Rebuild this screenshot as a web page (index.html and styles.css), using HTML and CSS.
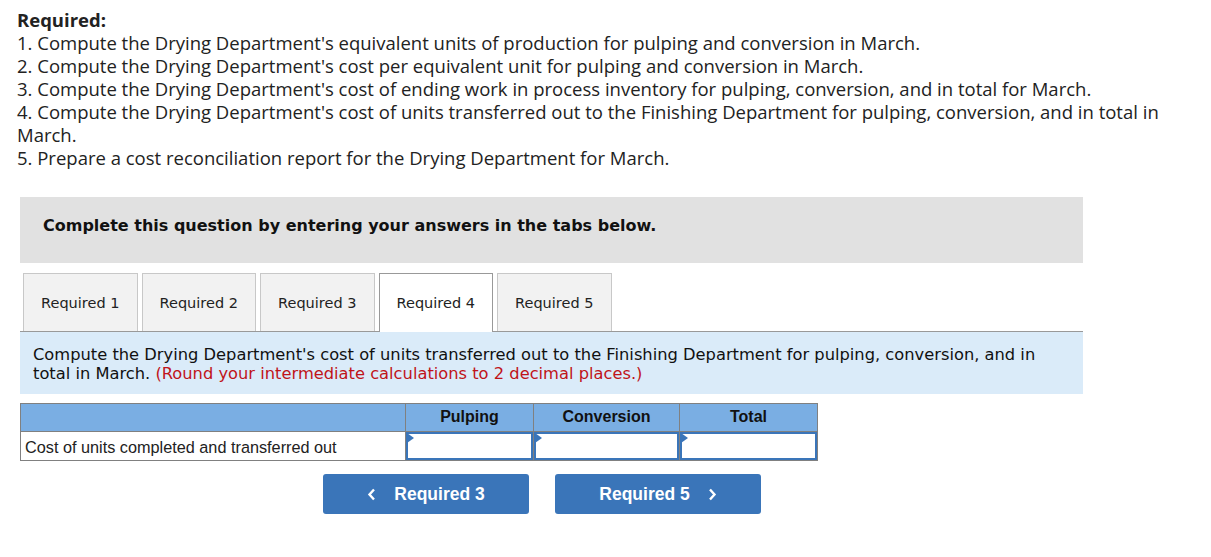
FILE: index.html
```html
<!DOCTYPE html>
<html>
<head>
<meta charset="utf-8">
<link rel="stylesheet" href="styles.css">
</head>
<body>
<div class="page">
  <div class="req">
    <div class="req-title">Required:</div>
    <div>1. Compute the Drying Department's equivalent units of production for pulping and conversion in March.</div>
    <div>2. Compute the Drying Department's cost per equivalent unit for pulping and conversion in March.</div>
    <div>3. Compute the Drying Department's cost of ending work in process inventory for pulping, conversion, and in total for March.</div>
    <div>4. Compute the Drying Department's cost of units transferred out to the Finishing Department for pulping, conversion, and in total in March.</div>
    <div>5. Prepare a cost reconciliation report for the Drying Department for March.</div>
  </div>

  <div class="panel">
    <div class="notice">Complete this question by entering your answers in the tabs below.</div>
    <div class="tabs">
      <div class="tab">Required 1</div>
      <div class="tab">Required 2</div>
      <div class="tab">Required 3</div>
      <div class="tab active">Required 4</div>
      <div class="tab">Required 5</div>
    </div>
    <div class="instr">Compute the Drying Department's cost of units transferred out to the Finishing Department for pulping, conversion, and in total in March. <span class="red">(Round your intermediate calculations to 2 decimal places.)</span></div>

    <table class="grid">
      <tr class="head">
        <th class="c-label"></th>
        <th class="c-pulp">Pulping</th>
        <th class="c-conv">Conversion</th>
        <th class="c-tot">Total</th>
      </tr>
      <tr>
        <td class="label">Cost of units completed and transferred out</td>
        <td class="inp"><div class="box"><span class="flag"></span></div></td>
        <td class="inp"><div class="box"><span class="flag"></span></div></td>
        <td class="inp"><div class="box"><span class="flag"></span></div></td>
      </tr>
    </table>

    <div class="nav">
      <div class="btn"><svg class="chev l" width="9" height="13" viewBox="0 0 9 13"><path d="M7 1.5 L2.5 6.5 L7 11.5" fill="none" stroke="#fff" stroke-width="2.4"/></svg><span>Required 3</span></div>
      <div class="btn"><span>Required 5</span><svg class="chev r" width="9" height="13" viewBox="0 0 9 13"><path d="M2 1.5 L6.5 6.5 L2 11.5" fill="none" stroke="#fff" stroke-width="2.4"/></svg></div>
    </div>
  </div>
</div>
</body>
</html>
```

FILE: styles.css
```css
html, body { margin: 0; padding: 0; background: #fff; }
.page { padding: 8px 0 0 17px; }
.req {
  font-family: "Open Sans", Lato, sans-serif;
  font-size: 18.5px;
  line-height: 23px;
  color: #222;
  width: 1170px;
}
.req-title { font-weight: bold; }
.panel { margin: 28px 0 0 3px; width: 1063px; }
.notice {
  background: #e1e1e1;
  height: 66px;
  box-sizing: border-box;
  padding: 19px 0 0 23px;
  font-family: "DejaVu Sans", Verdana, sans-serif;
  font-weight: bold;
  font-size: 16px;
  color: #111;
}
.tabs {
  display: flex;
  gap: 4px;
  padding: 10px 0 0 3px;
  border-bottom: 1px solid #999;
  height: 58px;
}
.tab {
  width: 114.5px;
  box-sizing: border-box;
  height: 58px;
  border: 1px solid #c8c8c8;
  border-bottom: none;
  background: #f2f2f2;
  font-family: "DejaVu Sans", Verdana, sans-serif;
  font-size: 14.5px;
  color: #222;
  display: flex;
  align-items: center;
  justify-content: center;
}
.tab.active {
  background: #fff;
  border-color: #999;
  height: 59px;
  margin-bottom: -1px;
}
.instr {
  background: #daebf9;
  padding: 13px 40px 11px 13px;
  font-family: "DejaVu Sans", Verdana, sans-serif;
  font-size: 16.3px;
  line-height: 19px;
  color: #111;
}
.red { color: #c0141a; }
.grid {
  margin-top: 9px;
  border-collapse: collapse;
  font-family: "Liberation Sans", Arial, sans-serif;
}
.grid th {
  background: #7aaee3;
  border: 1px solid #808080;
  height: 27px;
  padding: 0;
  font-size: 16px;
  font-weight: bold;
  color: #111;
  vertical-align: top;
  line-height: 26px;
}
.c-label { width: 384px; }
.c-pulp { width: 127px; }
.c-conv { width: 145px; }
.c-tot { width: 137px; }
.grid td {
  border: 1px solid #808080;
  height: 28px;
  padding: 0;
}
.grid td.label {
  font-size: 16.25px;
  color: #222;
  padding: 2px 0 0 4px;
  box-sizing: border-box;
}
.grid td.inp { padding: 0; }
.box {
  position: relative;
  height: 28px;
  box-sizing: border-box;
  border: 2px solid #3a75b9;
  background: #fff;
}
.flag {
  position: absolute;
  left: -1px;
  top: -1px;
  width: 0;
  height: 0;
  border-top: 5px solid transparent;
  border-bottom: 5px solid transparent;
  border-left: 7px solid #3a75b9;
}
.nav {
  display: flex;
  gap: 26px;
  margin: 13px 0 0 303px;
}
.btn {
  width: 206px;
  height: 40px;
  box-sizing: border-box;
  background: #3a75b9;
  border-radius: 3px;
  color: #fff;
  font-family: "Liberation Sans", Arial, sans-serif;
  font-weight: bold;
  font-size: 17.5px;
  display: flex;
  align-items: center;
  justify-content: center;
}
.chev.l { margin-right: 18px; }
.chev.r { margin-left: 18px; }
```
